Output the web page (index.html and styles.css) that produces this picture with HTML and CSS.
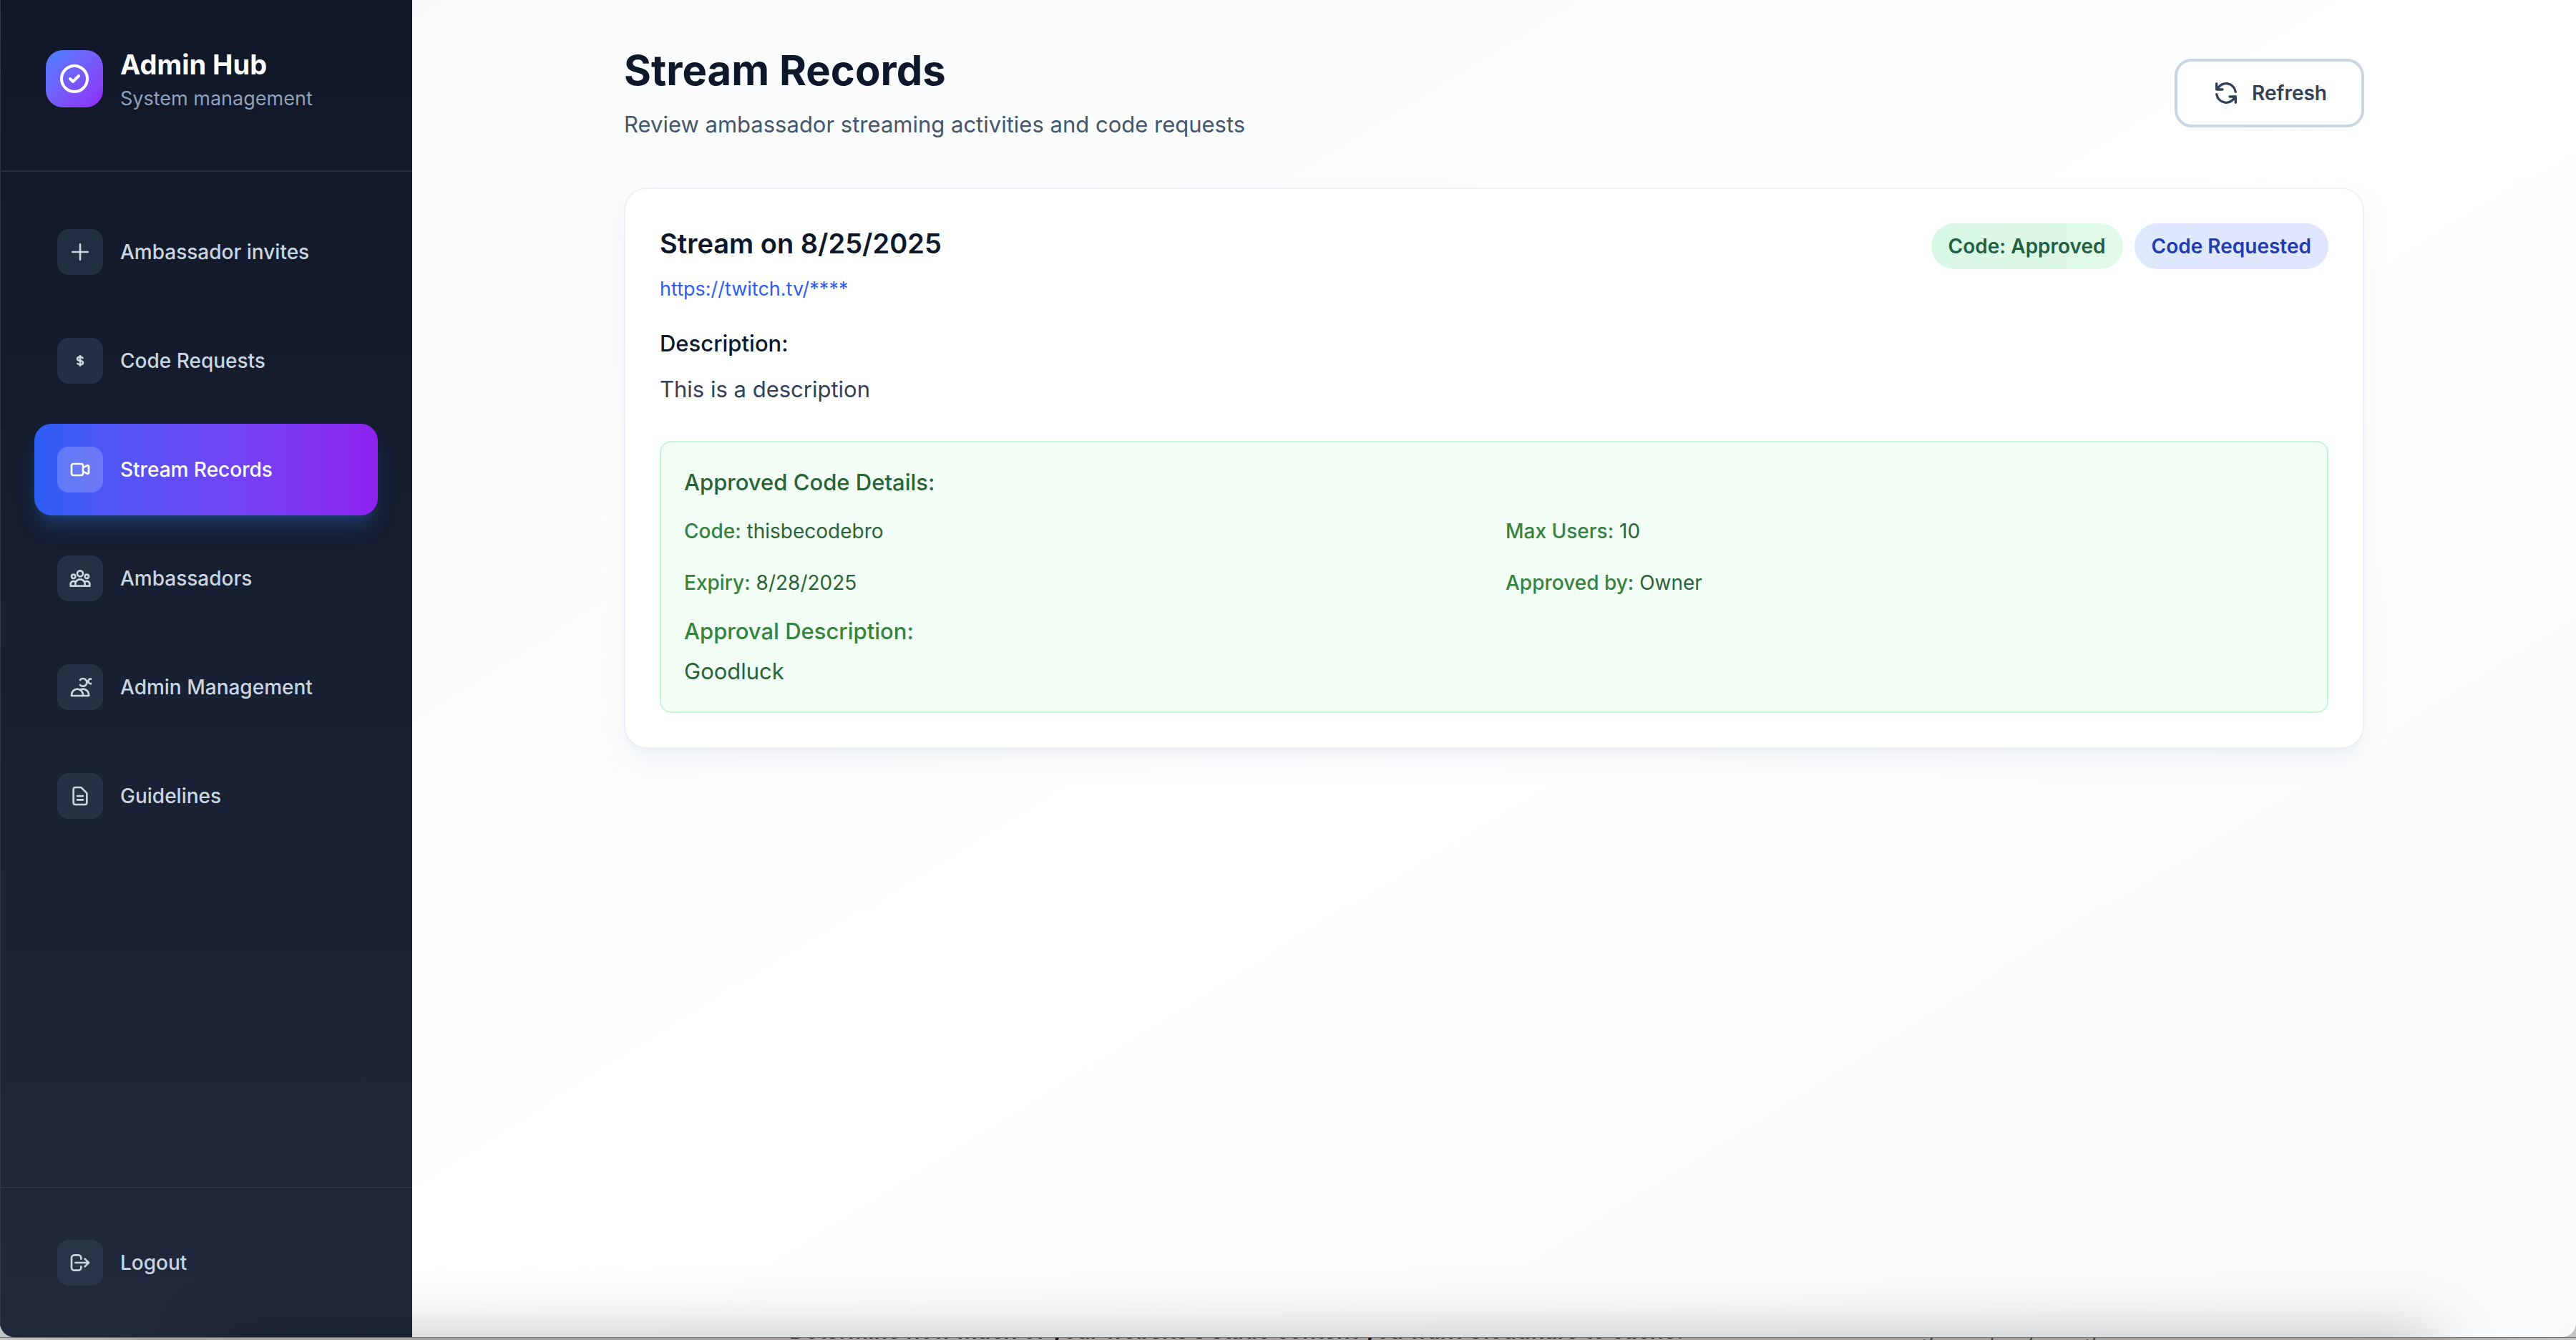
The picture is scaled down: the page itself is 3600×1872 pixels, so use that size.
FILE: index.html
```html
<!DOCTYPE html>
<html lang="en">
<head>
<meta charset="utf-8">
<title>Admin Hub - Stream Records</title>
<link rel="stylesheet" href="styles.css">
</head>
<body>
<div class="desktop">
  <div class="app">
    <aside class="sidebar">
      <header class="brand">
        <span class="brand-logo">
          <svg class="icon-lg" viewBox="0 0 24 24"><path d="M9 12l2 2 4-4m6 2a9 9 0 11-18 0 9 9 0 0118 0z"/></svg>
        </span>
        <div>
          <p class="brand-name">Admin Hub</p>
          <p class="brand-sub">System management</p>
        </div>
      </header>
      <nav class="nav">
        <a class="nav-item" href="#invites"><span class="nav-icon"><svg class="icon" viewBox="0 0 24 24"><path d="M12 4v16m8-8H4"/></svg></span>Ambassador invites</a>
        <a class="nav-item" href="#codes"><span class="nav-icon"><svg class="icon" viewBox="0 0 24 24"><path d="M12 8c-1.657 0-3 .895-3 2s1.343 2 3 2 3 .895 3 2-1.343 2-3 2m0-8c1.11 0 2.08.402 2.599 1M12 8V7m0 1v8m0 0v1m0-1c-1.11 0-2.08-.402-2.599-1"/></svg></span>Code Requests</a>
        <a class="nav-item active" href="#streams" aria-current="page"><span class="nav-icon"><svg class="icon" viewBox="0 0 24 24"><path d="M15 10l4.553-2.276A1 1 0 0121 8.618v6.764a1 1 0 01-1.447.894L15 14M5 18h8a2 2 0 002-2V8a2 2 0 00-2-2H5a2 2 0 00-2 2v8a2 2 0 002 2z"/></svg></span>Stream Records</a>
        <a class="nav-item" href="#ambassadors"><span class="nav-icon"><svg class="icon" viewBox="0 0 24 24"><path d="M17 20h5v-2a3 3 0 00-5.356-1.857M17 20H7m10 0v-2c0-.656-.126-1.283-.356-1.857M7 20H2v-2a3 3 0 015.356-1.857M7 20v-2c0-.656.126-1.283.356-1.857m0 0a5.002 5.002 0 019.288 0M15 7a3 3 0 11-6 0 3 3 0 016 0zm6 3a2 2 0 11-4 0 2 2 0 014 0zM7 10a2 2 0 11-4 0 2 2 0 014 0z"/></svg></span>Ambassadors</a>
        <a class="nav-item" href="#admins"><span class="nav-icon"><svg class="icon" viewBox="0 0 24 24"><path d="M12 4.354a4 4 0 110 5.292M15 21H3v-1a6 6 0 0112 0v1zm0 0h6v-1a6 6 0 00-9-5.197m13.500-9a2.500 2.500 0 11-5 0 2.500 2.500 0 015 0z"/></svg></span>Admin Management</a>
        <a class="nav-item" href="#guidelines"><span class="nav-icon"><svg class="icon" viewBox="0 0 24 24"><path d="M9 12h6m-6 4h6m2 5H7a2 2 0 01-2-2V5a2 2 0 012-2h5.586a1 1 0 01.707.293l5.414 5.414a1 1 0 01.293.707V19a2 2 0 01-2 2z"/></svg></span>Guidelines</a>
      </nav>
      <footer class="sidebar-foot">
        <button class="nav-item" type="button"><span class="nav-icon"><svg class="icon" viewBox="0 0 24 24"><path d="M17 16l4-4m0 0l-4-4m4 4H7m6 4v1a3 3 0 01-3 3H6a3 3 0 01-3-3V7a3 3 0 013-3h4a3 3 0 013 3v1"/></svg></span>Logout</button>
      </footer>
    </aside>
    <main class="main">
      <div class="content">
        <div class="page-head">
          <div>
            <h1>Stream Records</h1>
            <p class="page-sub">Review ambassador streaming activities and code requests</p>
          </div>
          <button class="refresh" type="button"><svg class="icon-md" viewBox="0 0 24 24"><path d="M4 4v5h.582m15.356 2A8.001 8.001 0 004.582 9m0 0H9m11 11v-5h-.581m0 0a8.003 8.003 0 01-15.357-2m15.357 2H15"/></svg>Refresh</button>
        </div>
        <article class="card">
          <div class="card-head">
            <div>
              <h2>Stream on 8/25/2025</h2>
              <a class="stream-link" href="#stream">https://twitch.tv/****</a>
            </div>
            <div class="badges">
              <span class="badge approved">Code: Approved</span>
              <span class="badge requested">Code Requested</span>
            </div>
          </div>
          <section class="description">
            <h3>Description:</h3>
            <p>This is a description</p>
          </section>
          <section class="details">
            <h3>Approved Code Details:</h3>
            <dl class="facts">
              <div><dt>Code:</dt> <dd>thisbecodebro</dd></div>
              <div><dt>Max Users:</dt> <dd>10</dd></div>
              <div><dt>Expiry:</dt> <dd>8/28/2025</dd></div>
              <div><dt>Approved by:</dt> <dd>Owner</dd></div>
            </dl>
            <h4>Approval Description:</h4>
            <p>Goodluck</p>
          </section>
        </article>
      </div>
    </main>
  </div>
  <div class="behind">
    <p>Determine how much of your website’s static content you want Cloudflare to cache.</p>
    <p class="behind-option">Ignore query string</p>
  </div>
</div>
</body>
</html>
```
FILE: styles.css
```css
* { box-sizing: border-box; margin: 0; }
body { font-family: Inter, "Liberation Sans", sans-serif; font-size: 31px; line-height: 48px; }
a { text-decoration: none; }
button { font: inherit; cursor: pointer; }
svg { fill: none; stroke: currentColor; stroke-width: 2; stroke-linecap: round; stroke-linejoin: round; overflow: hidden; }
.icon { width: 32px; height: 32px; }
.icon-md { width: 40px; height: 40px; }
.icon-lg { width: 48px; height: 48px; }

.desktop { min-height: 100vh; display: flex; flex-direction: column; background: linear-gradient(90deg, #c4c4c4, #a8a39f 200px calc(100% - 200px), #c4c4c4); }
.app { flex: 1; display: flex; position: relative; overflow: hidden; border-radius: 0 0 20px 20px; }
/* shade cast along the lower edge of the window */
.app::after { content: ""; position: absolute; inset: 100% 200px auto 300px; height: 200px; box-shadow: 0 0 90px rgba(0, 0, 0, .26); }
.behind { display: grid; grid-template-columns: 1575px 1fr; align-content: end; height: 4px; padding-left: 1103px; overflow: hidden; border-top: 1px solid #6e6e6e; color: #111; font-size: 31px; line-height: 26px; font-weight: 600; }
.behind-option { color: #444; font-size: 28px; font-weight: 400; }

.sidebar { width: 576px; display: flex; flex-direction: column; background: linear-gradient(#101729, #1f293b); color: #cad5e2; box-shadow: inset 1px 0 #303849; }
.brand { display: flex; align-items: center; gap: 24px; padding: 62px 64px 80px; border-bottom: 2px solid #232d41; }
.brand-logo { width: 80px; height: 80px; border-radius: 24px; display: grid; place-items: center; color: #fff; background: linear-gradient(135deg in oklab, #447fff, #8f24f5); }
.brand-name { font-size: 38px; line-height: 56px; font-weight: 700; color: #fff; }
.brand-sub { font-size: 27px; line-height: 40px; color: #90a1b9; }
.nav { flex: 1; display: flex; flex-direction: column; gap: 24px; padding: 48px; }
.nav-item { display: flex; align-items: center; gap: 24px; width: 100%; padding: 32px; border: 0; border-radius: 24px; background: none; color: #cad5e2; font-size: 28px; line-height: 40px; font-weight: 500; }
.nav-icon { width: 64px; height: 64px; border-radius: 16px; display: grid; place-items: center; background: rgba(49, 65, 88, .5); }
.nav-item.active { color: #fff; background: linear-gradient(90deg in oklab, #2b5ef5, #8f20f0); box-shadow: 0 20px 30px -6px rgba(43, 127, 255, .25), 0 8px 12px -8px rgba(43, 127, 255, .25); }
.active .nav-icon { background: rgba(255, 255, 255, .2); }
.sidebar-foot { padding: 40px 48px; border-top: 2px solid #2a3548; }

.main { flex: 1; padding: 62px 64px; background: linear-gradient(to bottom right, #f8fafc, #fff 50%, #f8fafc); }
.content { max-width: 2432px; margin: 0 auto; display: flex; flex-direction: column; gap: 64px; }
.page-head { display: flex; align-items: center; justify-content: space-between; }
h1 { font-size: 58px; line-height: 72px; font-weight: 700; color: #0f172b; }
.page-sub { margin-top: 16px; color: #45556c; }
.refresh { display: flex; align-items: center; gap: 16px; height: 96px; padding: 0 48px; border: 4px solid #cad5e2; border-radius: 24px; background: #fff; color: #314158; font-size: 28px; line-height: 40px; font-weight: 600; }
.card { padding: 48px; border: 2px solid rgba(226, 232, 240, .5); border-radius: 32px; background: #fff; background-clip: padding-box; box-shadow: 0 20px 30px -6px rgba(226, 232, 240, .5), 0 8px 12px -8px rgba(226, 232, 240, .5); }
.card-head { display: flex; align-items: flex-start; justify-content: space-between; }
h2 { font-size: 38px; line-height: 56px; font-weight: 600; color: #0f172b; }
.stream-link { display: block; margin-top: 16px; font-size: 27px; line-height: 40px; color: #2f5df0; }
.badges { display: flex; gap: 16px; }
.badge { padding: 12px 24px; border-radius: 32px; font-size: 28px; line-height: 40px; font-weight: 600; }
.approved { color: #235f42; background: linear-gradient(90deg, #d8f8e5, #e0fae7); }
.requested { color: #233bb0; background: linear-gradient(90deg, #dde9fd, #e1e6fd); }
.description { margin-top: 32px; color: #314158; }
h3 { font-size: 31px; line-height: 48px; font-weight: 500; color: #0f172b; }
.description p { margin-top: 16px; }
.details { margin-top: 48px; padding: 32px; border: 2px solid #c5f6d3; border-radius: 16px; background: #f2fdf5; color: #2a6336; }
.details h3 { color: #2a6336; }
.facts { display: grid; grid-template-columns: 1fr 1fr; gap: 32px; margin: 24px 0; font-size: 28px; line-height: 40px; }
dt, dd { display: inline; margin: 0; }
dt { font-weight: 500; color: #368340; }
h4 { margin-bottom: 8px; font-size: 31px; line-height: 48px; font-weight: 500; color: #368340; }
```
